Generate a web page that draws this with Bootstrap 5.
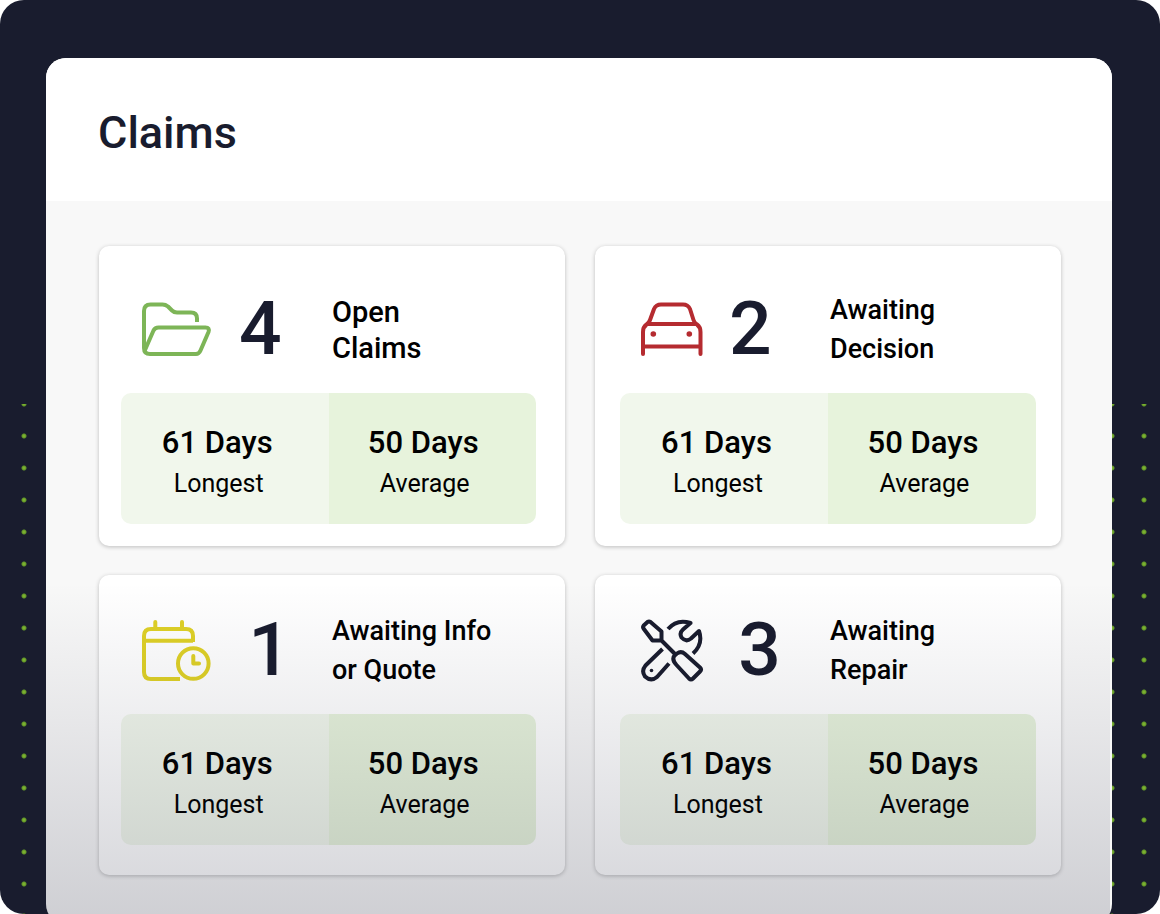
<!DOCTYPE html>
<html lang="en">
<head>
<meta charset="utf-8">
<meta name="viewport" content="width=device-width, initial-scale=1">
<title>Claims</title>
<link href="https://cdn.jsdelivr.net/npm/bootstrap@5.3.0/dist/css/bootstrap.min.css" rel="stylesheet">
<style>
  body { font-family: Roboto, "Liberation Sans", sans-serif; background: #fff; color: #000; }
  .frame { height: 100vh; background: #191c2e; border-radius: 24px; padding: 58px 48px 0 46px; }
  /* dotted pattern behind the panel */
  .frame::before {
    content: ""; position: absolute; inset: 404px 0 0 0;
    background: radial-gradient(circle, #7cb030 1px, #5f9428 2px, transparent 3px) 8px 16px / 32px 32px;
  }
  .panel { background: #f8f8f8; border-radius: 20px; }
  /* fade over the lower tiles */
  .panel::after {
    content: ""; position: absolute; inset: 524px 2px 0 0; pointer-events: none;
    background: linear-gradient(rgba(25, 28, 56, 0), rgba(25, 28, 52, .19));
  }
  .panel-head { background: #fff; padding: 46px 52px 39px; }
  .panel-head h1 { font-size: 45px; line-height: 58px; font-weight: 500; color: #191c2e; }
  .tiles { grid-template-columns: 1fr 1fr; gap: 29px 30px; padding: 45px 51px 49px 53px; }
  .tile { border: 0; border-radius: 10px; padding: 8px 29px 22px 22px; box-shadow: 0 1px 4px rgba(0, 0, 0, .24); }
  .tile:nth-child(even) { padding-left: 25px; padding-right: 25px; }
  .tile:nth-child(n+3) { padding-top: 0; padding-bottom: 30px; }
  .tile-head { height: 139px; padding: 12px 0 0 21px; }
  .tile-icon { width: 70px; height: 64px; fill: none; stroke-width: 4; stroke-linecap: round; stroke-linejoin: round; }
  .tile-count { width: 52px; margin: 0 41px 0 27px; padding-bottom: 4px; font-size: 75px; line-height: 76px; font-weight: 500; color: #191c2e; }
  .tile:nth-child(even) .tile-count { margin-left: 18px; margin-right: 49px; }
  .tile-label { font-size: 27px; line-height: 39px; font-weight: 500; }
  .tile-label-lg { font-size: 29px; line-height: 36px; }
  .stats { border-radius: 10px; }
  .stat { padding: 29px 15px 20px 0; background: #f1f7ec; }
  .stat + .stat { padding-right: 18px; background: #e7f3dc; }
  .stat-value { font-size: 31px; line-height: 42px; font-weight: 500; }
  .stat-name { padding-left: 3px; font-size: 25px; line-height: 40px; }
</style>
</head>
<body>
<main class="frame position-relative overflow-hidden">
  <section class="panel position-relative overflow-hidden">
    <header class="panel-head"><h1 class="m-0">Claims</h1></header>
    <div class="tiles d-grid">

      <article class="card tile">
        <div class="tile-head d-flex align-items-center">
          <svg class="tile-icon flex-shrink-0" viewBox="0 0 70 64" stroke="#7db557" aria-hidden="true">
            <path stroke-linecap="butt" d="M55 24V20.500Q55 14.500 49 14.500H35q-3 0-5-2l-4-4Q23.500 6.500 20.500 6.500H8.500Q2 6.500 2 13V50Q2 56 8 56H54Q57 56 58.500 52.500L66.500 34Q68 29.500 63.500 29.500H16.500Q13 29.500 11.500 32.500L3 52"/>
          </svg>
          <div class="tile-count flex-shrink-0">4</div>
          <div class="tile-label tile-label-lg">Open<br>Claims</div>
        </div>
        <div class="stats d-flex overflow-hidden text-center">
          <div class="stat w-50"><div class="stat-value">61 Days</div><div class="stat-name">Longest</div></div>
          <div class="stat w-50"><div class="stat-value">50 Days</div><div class="stat-name">Average</div></div>
        </div>
      </article>

      <article class="card tile">
        <div class="tile-head d-flex align-items-center">
          <svg class="tile-icon flex-shrink-0" viewBox="1 0 70 64" stroke="#b52b30" aria-hidden="true">
            <path d="M3 56V34Q3 29 6.500 26.500Q9 25 10 22L14 11Q16 6.500 21 6.500H43Q48 6.500 50 11L53.500 22Q54.500 25 57 26.500Q60.500 29 60.500 34V56M8 26H55.500M3 48.500H60.500"/>
            <g fill="#b52b30" stroke="none"><circle cx="13.300" cy="36" r="2.800"/><circle cx="49.300" cy="36" r="2.800"/></g>
          </svg>
          <div class="tile-count flex-shrink-0">2</div>
          <div class="tile-label">Awaiting<br>Decision</div>
        </div>
        <div class="stats d-flex overflow-hidden text-center">
          <div class="stat w-50"><div class="stat-value">61 Days</div><div class="stat-name">Longest</div></div>
          <div class="stat w-50"><div class="stat-value">50 Days</div><div class="stat-name">Average</div></div>
        </div>
      </article>

      <article class="card tile">
        <div class="tile-head d-flex align-items-center">
          <svg class="tile-icon flex-shrink-0" viewBox="0 0 70 64" stroke="#dfd126" aria-hidden="true">
            <path stroke-linecap="butt" d="M38 60H9Q2 60 2 53V17Q2 10 9 10H44Q51 10 51 17V23M2 21.700H51"/>
            <path d="M13.300 3V10M40 3V10M51.300 37V44.500H57"/>
            <circle cx="51.300" cy="44.500" r="15.300"/>
          </svg>
          <div class="tile-count flex-shrink-0 text-end">1</div>
          <div class="tile-label">Awaiting Info<br>or Quote</div>
        </div>
        <div class="stats d-flex overflow-hidden text-center">
          <div class="stat w-50"><div class="stat-value">61 Days</div><div class="stat-name">Longest</div></div>
          <div class="stat w-50"><div class="stat-value">50 Days</div><div class="stat-name">Average</div></div>
        </div>
      </article>

      <article class="card tile">
        <div class="tile-head d-flex align-items-center">
          <svg class="tile-icon flex-shrink-0" viewBox="1 0 70 64" stroke="#191c2e" aria-hidden="true">
            <path d="M7.500 3L3.700 6.500Q2.500 8 3.500 9.500L12.500 21.500H21.500V12.500L10.500 3Q9 2 7.500 3ZM21.500 21.500L35.500 35.500"/>
            <path d="M35 36L37 34.500Q41 31.500 45 35L60 48.500Q62 50.500 60 52.500L53 59.500Q51 61.500 49 59.500L36.500 46Q31 40 35 36Z"/>
            <path stroke-linecap="butt" d="M28 10Q37 -.500 50.500 4L43 10.500Q39 14 41.500 18.500Q46 23.500 51 19.500L59 12Q63.500 25 53 34.500M22.500 30L5.500 46.500Q1 52 5 57.500Q11 63 17 58L29 44.500"/>
            <circle cx="11.500" cy="51.500" r="1.800" fill="#191c2e" stroke="none"/>
          </svg>
          <div class="tile-count flex-shrink-0 text-end">3</div>
          <div class="tile-label">Awaiting<br>Repair</div>
        </div>
        <div class="stats d-flex overflow-hidden text-center">
          <div class="stat w-50"><div class="stat-value">61 Days</div><div class="stat-name">Longest</div></div>
          <div class="stat w-50"><div class="stat-value">50 Days</div><div class="stat-name">Average</div></div>
        </div>
      </article>

    </div>
  </section>
</main>
<script src="https://cdn.jsdelivr.net/npm/bootstrap@5.3.0/dist/js/bootstrap.bundle.min.js"></script>
</body>
</html>
